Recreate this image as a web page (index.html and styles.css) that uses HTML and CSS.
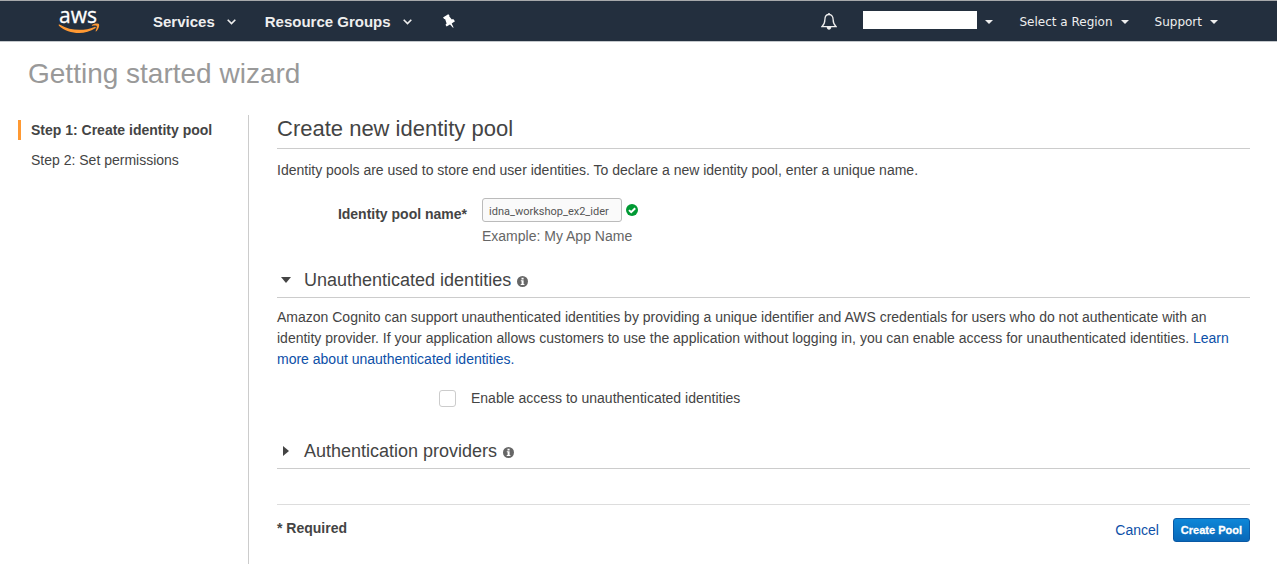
FILE: index.html
```html
<!DOCTYPE html>
<html lang="en">
<head>
<meta charset="utf-8">
<title>Getting started wizard</title>
<link rel="stylesheet" href="styles.css">
</head>
<body>
<header class="topbar">
  <a class="logo" href="#">
    <span class="logo-text">aws</span>
    <svg class="logo-smile" viewBox="0 0 42 11" aria-hidden="true">
      <path d="M0.6 1.8C0.9 1.3 1.4 1.3 2 1.7C12.500 8 26 8.300 36.500 3.900C37.600 3.400 38.400 4.500 37.300 5.300C26.500 12.600 10.500 11.300 0.900 2.800Z"/>
      <path d="M34 2C36.500 0.300 40.300 0.300 41 1.200C41.600 2.200 40.600 6.300 38.300 8.200C37.700 8.600 37.400 8.300 37.700 7.700C38.300 6.200 39.200 3.600 38.700 3C38.200 2.400 35.900 2.600 34.600 2.700C33.900 2.800 33.600 2.400 34 2Z"/>
    </svg>
  </a>
  <nav class="nav-main">
    <button class="nav-button" type="button">Services
      <svg class="chevron" viewBox="0 0 9 6" aria-hidden="true"><path d="M0.700 0.800l3.800 3.800 3.800-3.800"/></svg>
    </button>
    <button class="nav-button" type="button">Resource Groups
      <svg class="chevron" viewBox="0 0 9 6" aria-hidden="true"><path d="M0.700 0.800l3.800 3.800 3.800-3.800"/></svg>
    </button>
    <button class="icon-button" type="button" aria-label="Pin shortcuts">
      <svg class="pin" viewBox="0 0 12 14" aria-hidden="true"><path d="M5.200 0.200L6.400 1.300L6.200 2.300L8.800 5.400L10.200 4.900L12 7.300L8.700 9.500L10.600 13.500L10 13.800L7 10.500L3.600 12.500L2.500 10.700L3.600 9.400L2.200 5.300L1.200 5.100L0 3.500Z"/></svg>
    </button>
  </nav>
  <nav class="nav-user">
    <button class="icon-button" type="button" aria-label="Notifications">
      <svg class="bell" viewBox="0 0 16 17" aria-hidden="true">
        <path class="bell-line" d="M8 1.500C5 1.500 3.900 3.900 3.900 6.500C3.900 10.200 3 11.600 0.900 13.600H15.100C13 11.600 12.100 10.200 12.100 6.500C12.100 3.900 11 1.500 8 1.500Z"/>
        <path class="bell-fill" d="M7 0.300H9V2H7ZM5.700 14H10.300C10.100 15.800 9.200 16.700 8 16.700S5.900 15.800 5.700 14Z"/>
      </svg>
    </button>
    <button class="user-button" type="button" aria-label="Account"><span class="account-name"></span><span class="caret"></span></button>
    <button class="user-button" type="button">Select a Region<span class="caret"></span></button>
    <button class="user-button" type="button">Support<span class="caret"></span></button>
  </nav>
</header>
<h1 class="page-title">Getting started wizard</h1>
<div class="layout">
  <aside class="sidebar">
    <ol class="steps">
      <li class="step step-current" aria-current="step">Step 1: Create identity pool</li>
      <li class="step">Step 2: Set permissions</li>
    </ol>
  </aside>
  <main class="content">
    <form>
      <h2 class="heading">Create new identity pool</h2>
      <p class="intro">Identity pools are used to store end user identities. To declare a new identity pool, enter a unique name.</p>
      <div class="field">
        <label class="field-label" for="pool-name">Identity pool name*</label>
        <div class="field-body">
          <div class="input-row">
            <input class="text-input" id="pool-name" type="text" value="idna_workshop_ex2_ider" aria-describedby="pool-hint">
            <svg class="valid" viewBox="0 0 12 12" aria-hidden="true"><circle cx="6" cy="6" r="6"/><path d="M3 6.100L5.200 8.200L9.200 4.200"/></svg>
          </div>
          <span class="hint" id="pool-hint">Example: My App Name</span>
        </div>
      </div>
      <h3 class="section-heading">
        <button class="toggle" type="button" aria-expanded="true"><span class="arrow arrow-down"></span>Unauthenticated identities</button>
        <svg class="info" viewBox="0 0 11 11" aria-hidden="true"><circle cx="5.500" cy="5.500" r="5.500"/><path d="M4.500 1.800H6.600V3.400H4.500ZM3.800 4.300H6.600V8H7.400V9H3.700V8H4.600V5.200H3.800Z"/></svg>
      </h3>
      <p class="section-text">Amazon Cognito can support unauthenticated identities by providing a unique identifier and AWS credentials for users who do not authenticate with an identity provider. If your application allows customers to use the application without logging in, you can enable access for unauthenticated identities. <a class="link" href="#">Learn more about unauthenticated identities.</a></p>
      <div class="check-row">
        <input class="checkbox" id="enable-access" type="checkbox">
        <label for="enable-access">Enable access to unauthenticated identities</label>
      </div>
      <h3 class="section-heading">
        <button class="toggle" type="button" aria-expanded="false"><span class="arrow arrow-right"></span>Authentication providers</button>
        <svg class="info" viewBox="0 0 11 11" aria-hidden="true"><circle cx="5.500" cy="5.500" r="5.500"/><path d="M4.500 1.800H6.600V3.400H4.500ZM3.800 4.300H6.600V8H7.400V9H3.700V8H4.600V5.200H3.800Z"/></svg>
      </h3>
      <div class="form-footer">
        <span class="required">* Required</span>
        <div class="actions">
          <a class="link" href="#">Cancel</a>
          <button class="primary" type="submit">Create Pool</button>
        </div>
      </div>
    </form>
  </main>
</div>
</body>
</html>
```
FILE: styles.css
```css
* {
  box-sizing: border-box;
}

body {
  display: flex;
  flex-direction: column;
  min-height: 100vh;
  margin: 0;
  background: #fff;
  color: #444;
  font: 14px/21px "Liberation Sans", Arial, sans-serif;
}

button {
  margin: 0;
  padding: 0;
  border: 0;
  background: none;
  color: inherit;
  font: inherit;
  cursor: pointer;
}

svg {
  display: block;
  flex: none;
}

h1, h2, h3, p, ol {
  margin: 0;
}

.topbar {
  display: flex;
  align-items: center;
  height: 42px;
  padding: 0 59px 0 58px;
  border-top: 1px solid #a7a9ab;
  border-bottom: 1px solid #c4c8cc;
  background: #232f3e;
  color: #eee;
}

.logo {
  display: flex;
  flex-direction: column;
  width: 42px;
  padding-bottom: 2px;
  color: #fff;
  text-decoration: none;
}

.logo-text {
  padding-right: 2px;
  font: 21px/16px "Open Sans", "Noto Sans", sans-serif;
  text-align: center;
  -webkit-text-stroke: 0.3px #fff;
}

.logo-smile {
  width: 42px;
  height: 11px;
  fill: #f93;
}

.nav-main {
  display: flex;
  align-items: center;
  gap: 29px;
  margin-left: 53px;
  font-size: 15px;
  font-weight: bold;
}

.nav-button {
  display: flex;
  align-items: center;
  gap: 12px;
}

.chevron {
  width: 9px;
  height: 6px;
  margin-top: 2px;
  fill: none;
  stroke: #eee;
  stroke-width: 1.6;
}

.pin {
  width: 12px;
  height: 14px;
  margin-left: 2px;
  fill: #fff;
}

.nav-user {
  display: flex;
  align-items: center;
  gap: 26px;
  margin-left: auto;
  font: 12px/18px "DejaVu Sans", Verdana, sans-serif;
}

.bell {
  width: 16px;
  height: 17px;
}

.bell-line {
  fill: none;
  stroke: #eee;
  stroke-width: 1.3;
}

.bell-fill {
  fill: #eee;
}

.user-button {
  display: flex;
  align-items: center;
  gap: 8px;
  padding-top: 2px;
}

.account-name {
  width: 114px;
  height: 18px;
  margin-bottom: 4px;
  background: #fff;
}

.caret {
  border: 4px solid transparent;
  border-top-color: #eee;
  border-bottom: 0;
}

.page-title {
  padding: 15px 28px 25px;
  color: #999;
  font-size: 28px;
  font-weight: normal;
  line-height: 33px;
}

.layout {
  display: flex;
  flex: 1;
}

.sidebar {
  flex: none;
  width: 249px;
  padding: 5px 18px;
  border-right: 1px solid #ccc;
}

.steps {
  display: flex;
  flex-direction: column;
  gap: 10px;
  padding: 0;
  list-style: none;
}

.step {
  padding-left: 10px;
  border-left: 3px solid transparent;
  line-height: 20px;
}

.step-current {
  border-left-color: #f93;
  font-weight: bold;
}

.content {
  flex: 1;
  min-width: 0;
  padding: 0 27px 20px 28px;
}

.heading {
  padding-bottom: 5px;
  border-bottom: 1px solid #ccc;
  font-size: 22px;
  font-weight: normal;
  line-height: 28px;
}

.intro {
  padding-top: 11px;
}

.field {
  display: flex;
  gap: 15px;
  padding-top: 17px;
}

.field-label {
  width: 190px;
  padding-top: 6px;
  font-weight: bold;
  text-align: right;
}

.field-body {
  display: flex;
  flex-direction: column;
  gap: 4px;
}

.input-row {
  display: flex;
  align-items: center;
  gap: 4px;
}

.text-input {
  width: 140px;
  height: 24px;
  padding: 2px 6px 0;
  border: 1px solid #bbb;
  border-radius: 3px;
  background: #fafafa;
  color: #555;
  font: 11px/16px Roboto, sans-serif;
}

.valid {
  width: 12px;
  height: 12px;
  fill: #093;
}

.valid path {
  fill: none;
  stroke: #fff;
  stroke-width: 2;
}

.hint {
  color: #666;
}

.section-heading {
  display: flex;
  align-items: center;
  gap: 6px;
  margin-top: 20px;
  padding-bottom: 4px;
  border-bottom: 1px solid #ccc;
  font-size: 18px;
  font-weight: normal;
  line-height: 26px;
}

.toggle {
  display: flex;
  align-items: center;
}

.arrow {
  display: flex;
  width: 27px;
  padding-left: 4px;
}

.arrow::before {
  border: 5px solid transparent;
  content: "";
}

.arrow-down::before {
  border-top: 6px solid #444;
  border-bottom: 0;
}

.arrow-right::before {
  margin-left: 2px;
  border-right: 0;
  border-left: 6px solid #444;
}

.info {
  width: 11px;
  height: 11px;
  margin-top: 3px;
  fill: #666;
}

.info path {
  fill: #fff;
}

.section-text {
  padding-top: 9px;
}

.link {
  color: #0d50a8;
  text-decoration: none;
}

.check-row {
  display: flex;
  align-items: center;
  gap: 15px;
  padding: 18px 0 9px 162px;
}

.checkbox {
  width: 17px;
  height: 17px;
  margin: 0;
  border: 1px solid #ccc;
  border-radius: 3px;
  background: #fff;
  appearance: none;
}

.form-footer {
  display: flex;
  justify-content: space-between;
  margin-top: 35px;
  padding-top: 13px;
  border-top: 1px solid #ddd;
}

.required {
  font-weight: bold;
}

.actions {
  display: flex;
  align-items: center;
  gap: 14px;
}

.primary {
  height: 24px;
  padding: 0 7px;
  border: 1px solid #0959a5;
  border-radius: 3px;
  background: linear-gradient(#0d87d8, #0968b8);
  color: #fff;
  font-size: 11px;
  font-weight: bold;
  -webkit-text-stroke: 0.3px #fff;
}
```
